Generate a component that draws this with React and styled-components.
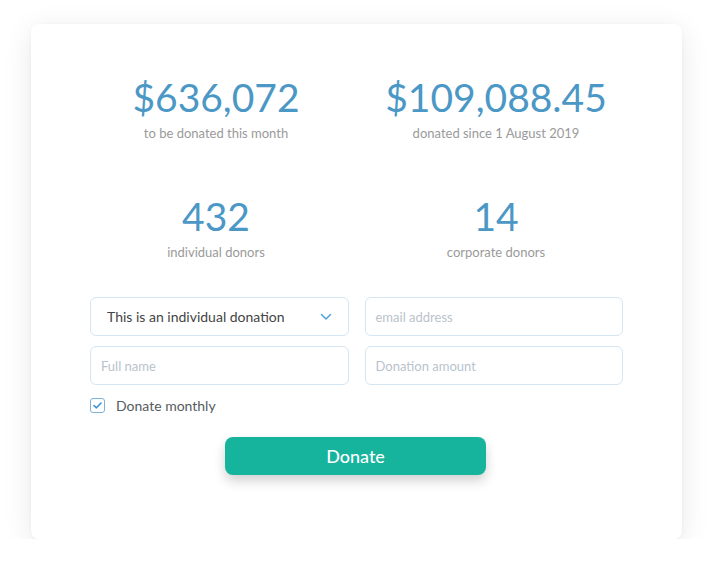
import React from "react";
import styled, { createGlobalStyle } from "styled-components";

const Global = createGlobalStyle`
  html, body { margin: 0; padding: 0; background: #ffffff; }
  body { font-family: "Lato", "Open Sans", sans-serif; }
  * { box-sizing: border-box; }
`;

const Page = styled.div`
  padding: 24px 0 0 31px;
`;

const Card = styled.div`
  width: 651px;
  height: 515px;
  background: #fff;
  border-radius: 8px;
  box-shadow: 0 6px 30px rgba(0, 0, 0, 0.09), 0 1px 4px rgba(0, 0, 0, 0.04);
  padding: 50px 59px 0;
`;

const Stats = styled.div`
  display: grid;
  grid-template-columns: 280px 280px;
  row-gap: 52px;
  margin: 0 -14px;
`;

const Stat = styled.div`
  display: flex;
  flex-direction: column;
  align-items: center;
`;

const Number = styled.div`
  font-size: 39px;
  line-height: 46px;
  color: #4b97c5;
  font-weight: 400;
`;

const Label = styled.div`
  font-size: 13px;
  line-height: 16px;
  margin-top: 5px;
  color: #9a9a9a;
`;

const Form = styled.div`
  margin-top: 37px;
  display: grid;
  grid-template-columns: 1fr 1fr;
  column-gap: 16px;
  row-gap: 10px;
`;

const Field = styled.div`
  height: 39px;
  border: 1px solid #d5e6f2;
  border-radius: 6px;
  display: flex;
  align-items: center;
  justify-content: space-between;
  padding: 0 ${(p) => (p.$select ? "16px" : "10px")};
  font-size: ${(p) => (p.$select ? "14px" : "13px")};
  color: ${(p) => (p.$select ? "#444" : "#b9c3cc")};
`;

const CheckRow = styled.div`
  display: flex;
  align-items: center;
  gap: 11px;
  margin-top: 12px;
  font-size: 14px;
  color: #555b60;
`;

const Box = styled.div`
  width: 15px;
  height: 15px;
  border: 1px solid #7fb2d8;
  border-radius: 3px;
  display: flex;
  align-items: center;
  justify-content: center;
`;

const ButtonRow = styled.div`
  display: flex;
  justify-content: center;
  margin-top: 23px;
`;

const Button = styled.button`
  width: 261px;
  height: 38px;
  border: none;
  border-radius: 8px;
  background: #16b39d;
  color: #fff;
  font-family: "Lato", sans-serif;
  font-size: 18px;
  font-weight: 500;
  box-shadow: 0 6px 12px rgba(0, 0, 0, 0.18);
  margin-left: -2px;
`;

const stats = [
  ["$636,072", "to be donated this month"],
  ["$109,088.45", "donated since 1 August 2019"],
  ["432", "individual donors"],
  ["14", "corporate donors"],
];

export default function App() {
  return (
    <Page>
      <Global />
      <Card>
        <Stats>
          {stats.map(([n, l]) => (
            <Stat key={l}>
              <Number>{n}</Number>
              <Label>{l}</Label>
            </Stat>
          ))}
        </Stats>
        <Form>
          <Field $select>
            <span>This is an individual donation</span>
            <svg width="12" height="8" viewBox="0 0 12 8">
              <path d="M1.5 1.5 L6 6 L10.5 1.5" fill="none" stroke="#4aa3da" strokeWidth="1.5" strokeLinecap="round" strokeLinejoin="round" />
            </svg>
          </Field>
          <Field>email address</Field>
          <Field>Full name</Field>
          <Field>Donation amount</Field>
        </Form>
        <CheckRow>
          <Box>
            <svg width="9" height="7" viewBox="0 0 9 7">
              <path d="M1 3.5 L3.4 5.8 L8 1" fill="none" stroke="#3d8fd0" strokeWidth="1.6" strokeLinecap="round" strokeLinejoin="round" />
            </svg>
          </Box>
          Donate monthly
        </CheckRow>
        <ButtonRow>
          <Button>Donate</Button>
        </ButtonRow>
      </Card>
    </Page>
  );
}
